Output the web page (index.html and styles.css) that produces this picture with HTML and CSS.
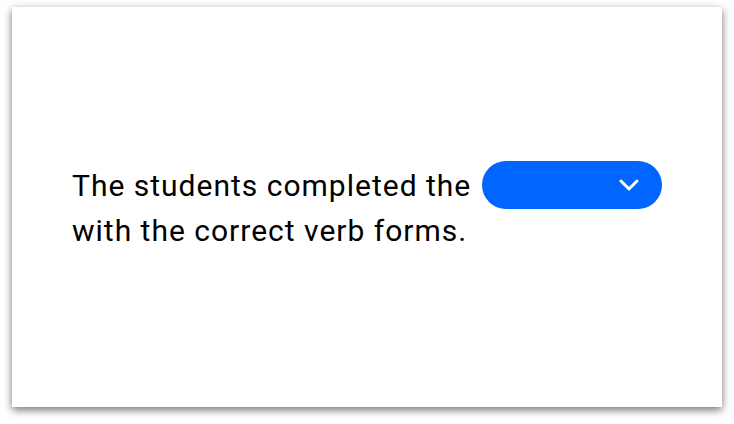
FILE: index.html
```html
<!DOCTYPE html>
<html>
<head>
<meta charset="utf-8">
<link rel="stylesheet" href="styles.css">
</head>
<body>
<div class="page">
  <div class="card">
    <p class="sentence">The students completed the <span class="select"><svg class="chev" width="20" height="12" viewBox="0 0 20 12"><path d="M2 2 L10 10 L18 2" fill="none" stroke="#fff" stroke-width="3" stroke-linecap="round" stroke-linejoin="round"/></svg></span><br>with the correct verb forms.</p>
  </div>
</div>
</body>
</html>
```
FILE: styles.css
```css
html, body {
  margin: 0;
  padding: 0;
  background: #fff;
}
.page {
  padding: 7px 12px 16px 12px;
}
.card {
  width: 710px;
  height: 400px;
  background: #fff;
  box-shadow: 0 3px 8px rgba(0,0,0,0.55);
  display: flex;
  flex-direction: column;
  justify-content: center;
  padding: 0 60px;
  box-sizing: border-box;
}
.sentence {
  margin: 0;
  font-family: Roboto, "Liberation Sans", sans-serif;
  font-size: 30px;
  letter-spacing: 1px;
  line-height: 44px;
  color: #000;
}
.select {
  display: inline-block;
  width: 180px;
  height: 48px;
  border-radius: 24px;
  background: #0066ff;
  vertical-align: -13px;
  margin-left: 2px;
}
.chev {
  display: block;
  margin: 18px 23px 0 auto;
}
```
